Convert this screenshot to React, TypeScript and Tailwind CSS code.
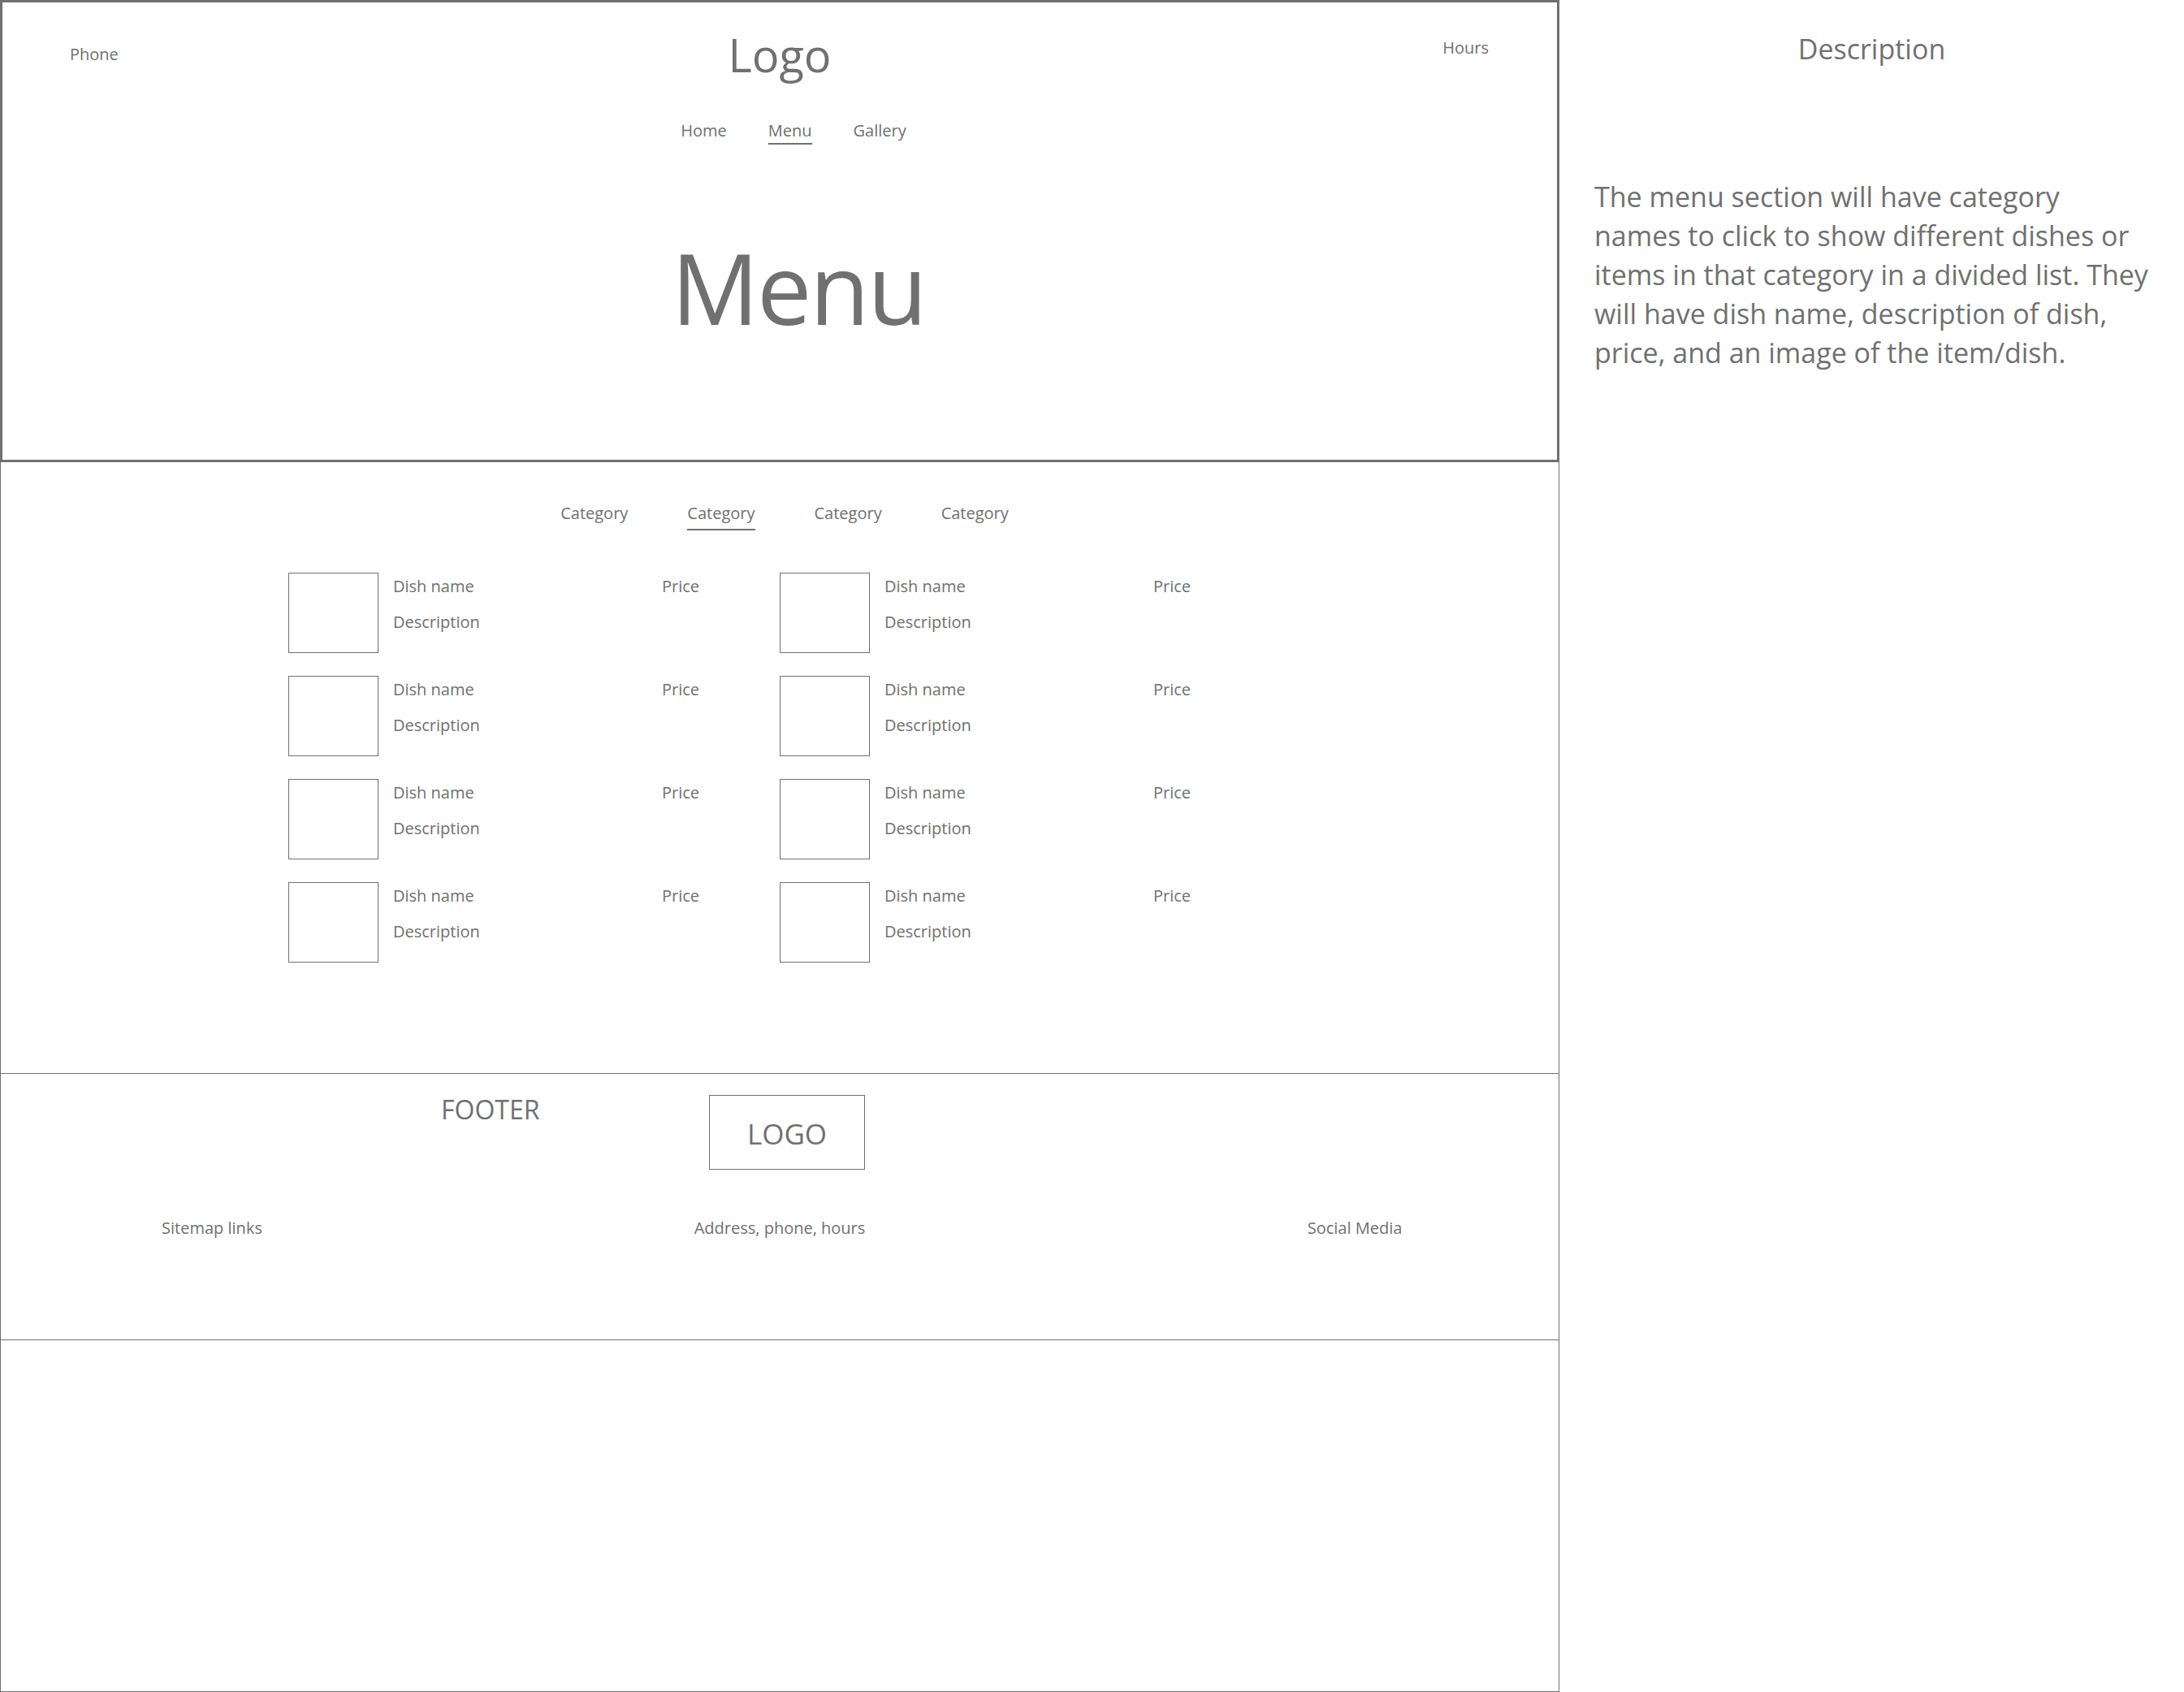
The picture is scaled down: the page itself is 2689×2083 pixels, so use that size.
import React from 'react'

const NAV = [
  { label: 'Home', active: false },
  { label: 'Menu', active: true },
  { label: 'Gallery', active: false },
]

const CATEGORIES = [
  { label: 'Category', active: false },
  { label: 'Category', active: true },
  { label: 'Category', active: false },
  { label: 'Category', active: false },
]

function DishRow() {
  return (
    <div className="flex items-start">
      <div className="h-[99px] w-[111px] shrink-0 border border-[#707070]" />
      <div className="ml-[18px] w-[331px] shrink-0 pt-[7px]">
        <p className="text-[20px] leading-none">Dish name</p>
        <p className="mt-[24px] text-[20px] leading-none">Description</p>
      </div>
      <p className="pt-[7px] text-[20px] leading-none">Price</p>
    </div>
  )
}

export default function App() {
  return (
    <div className="flex h-[2083px] w-[2689px] bg-white font-['Open_Sans',sans-serif] text-[#707070]">
      {/* Wireframe frame */}
      <div className="flex w-[1920px] shrink-0 flex-col">
        {/* Header */}
        <header className="h-[569px] shrink-0 border-[3px] border-[#707070]">
          <div className="grid grid-cols-3 items-start px-[83px] pt-[36px]">
            <span className="mt-[18px] justify-self-start text-[20px] leading-none">Phone</span>
            <span className="justify-self-center text-[56px] leading-none">Logo</span>
            <span className="mt-[10px] justify-self-end pr-[1px] text-[20px] leading-none">Hours</span>
          </div>

          <nav className="mt-[56px] flex items-start justify-center gap-[51px] pl-[34px]">
            {NAV.map((item) => (
              <span
                key={item.label}
                className={`text-[20px] leading-none ${
                  item.active ? 'border-b-2 border-[#707070] pb-[5px]' : ''
                }`}
              >
                {item.label}
              </span>
            ))}
          </nav>

          <div className="mt-[116px] flex justify-center pl-[46px]">
            <h1 className="text-[120px] leading-none tracking-[-0.02em]">Menu</h1>
          </div>
        </header>

        {/* Menu list */}
        <section className="h-[753px] shrink-0 border-x border-b border-[#707070]">
          <div className="mt-[53px] flex items-start justify-center gap-[73px] pl-[12px]">
            {CATEGORIES.map((cat, i) => (
              <span
                key={i}
                className={`text-[20px] leading-none ${
                  cat.active ? 'border-b-2 border-[#707070] pb-[9px]' : ''
                }`}
              >
                {cat.label}
              </span>
            ))}
          </div>

          <div className="mt-[52px] grid grid-cols-[605px_605px] gap-y-[28px] pl-[354px]">
            {Array.from({ length: 8 }).map((_, i) => (
              <DishRow key={i} />
            ))}
          </div>
        </section>

        {/* Footer */}
        <footer className="h-[328px] shrink-0 border-x border-b border-[#707070]">
          <div className="flex items-start pl-[542px] pt-[26px]">
            <span className="mt-[2px] w-[330px] text-[32px] leading-none">FOOTER</span>
            <div className="flex h-[92px] w-[192px] items-center justify-center border border-[#707070] pt-[2px]">
              <span className="text-[35px] leading-none">LOGO</span>
            </div>
          </div>

          <div className="mt-[62px] flex text-[20px] leading-none">
            <span className="w-[520px] text-center">Sitemap links</span>
            <span className="w-[878px] text-center">Address, phone, hours</span>
            <span className="w-[520px] pl-[18px] text-center">Social Media</span>
          </div>
        </footer>

        <div className="flex-1 border-x border-b border-[#707070]" />
      </div>

      {/* Description panel */}
      <aside className="flex-1">
        <h2 className="mt-[43px] text-center text-[34px] leading-none">Description</h2>
        <p className="mt-[141px] pl-[43px] text-[34px] leading-[48px] whitespace-nowrap">
          The menu section will have category
          <br />
          names to click to show different dishes or
          <br />
          items in that category in a divided list. They
          <br />
          will have dish name, description of dish,
          <br />
          price, and an image of the item/dish.
        </p>
      </aside>
    </div>
  )
}
